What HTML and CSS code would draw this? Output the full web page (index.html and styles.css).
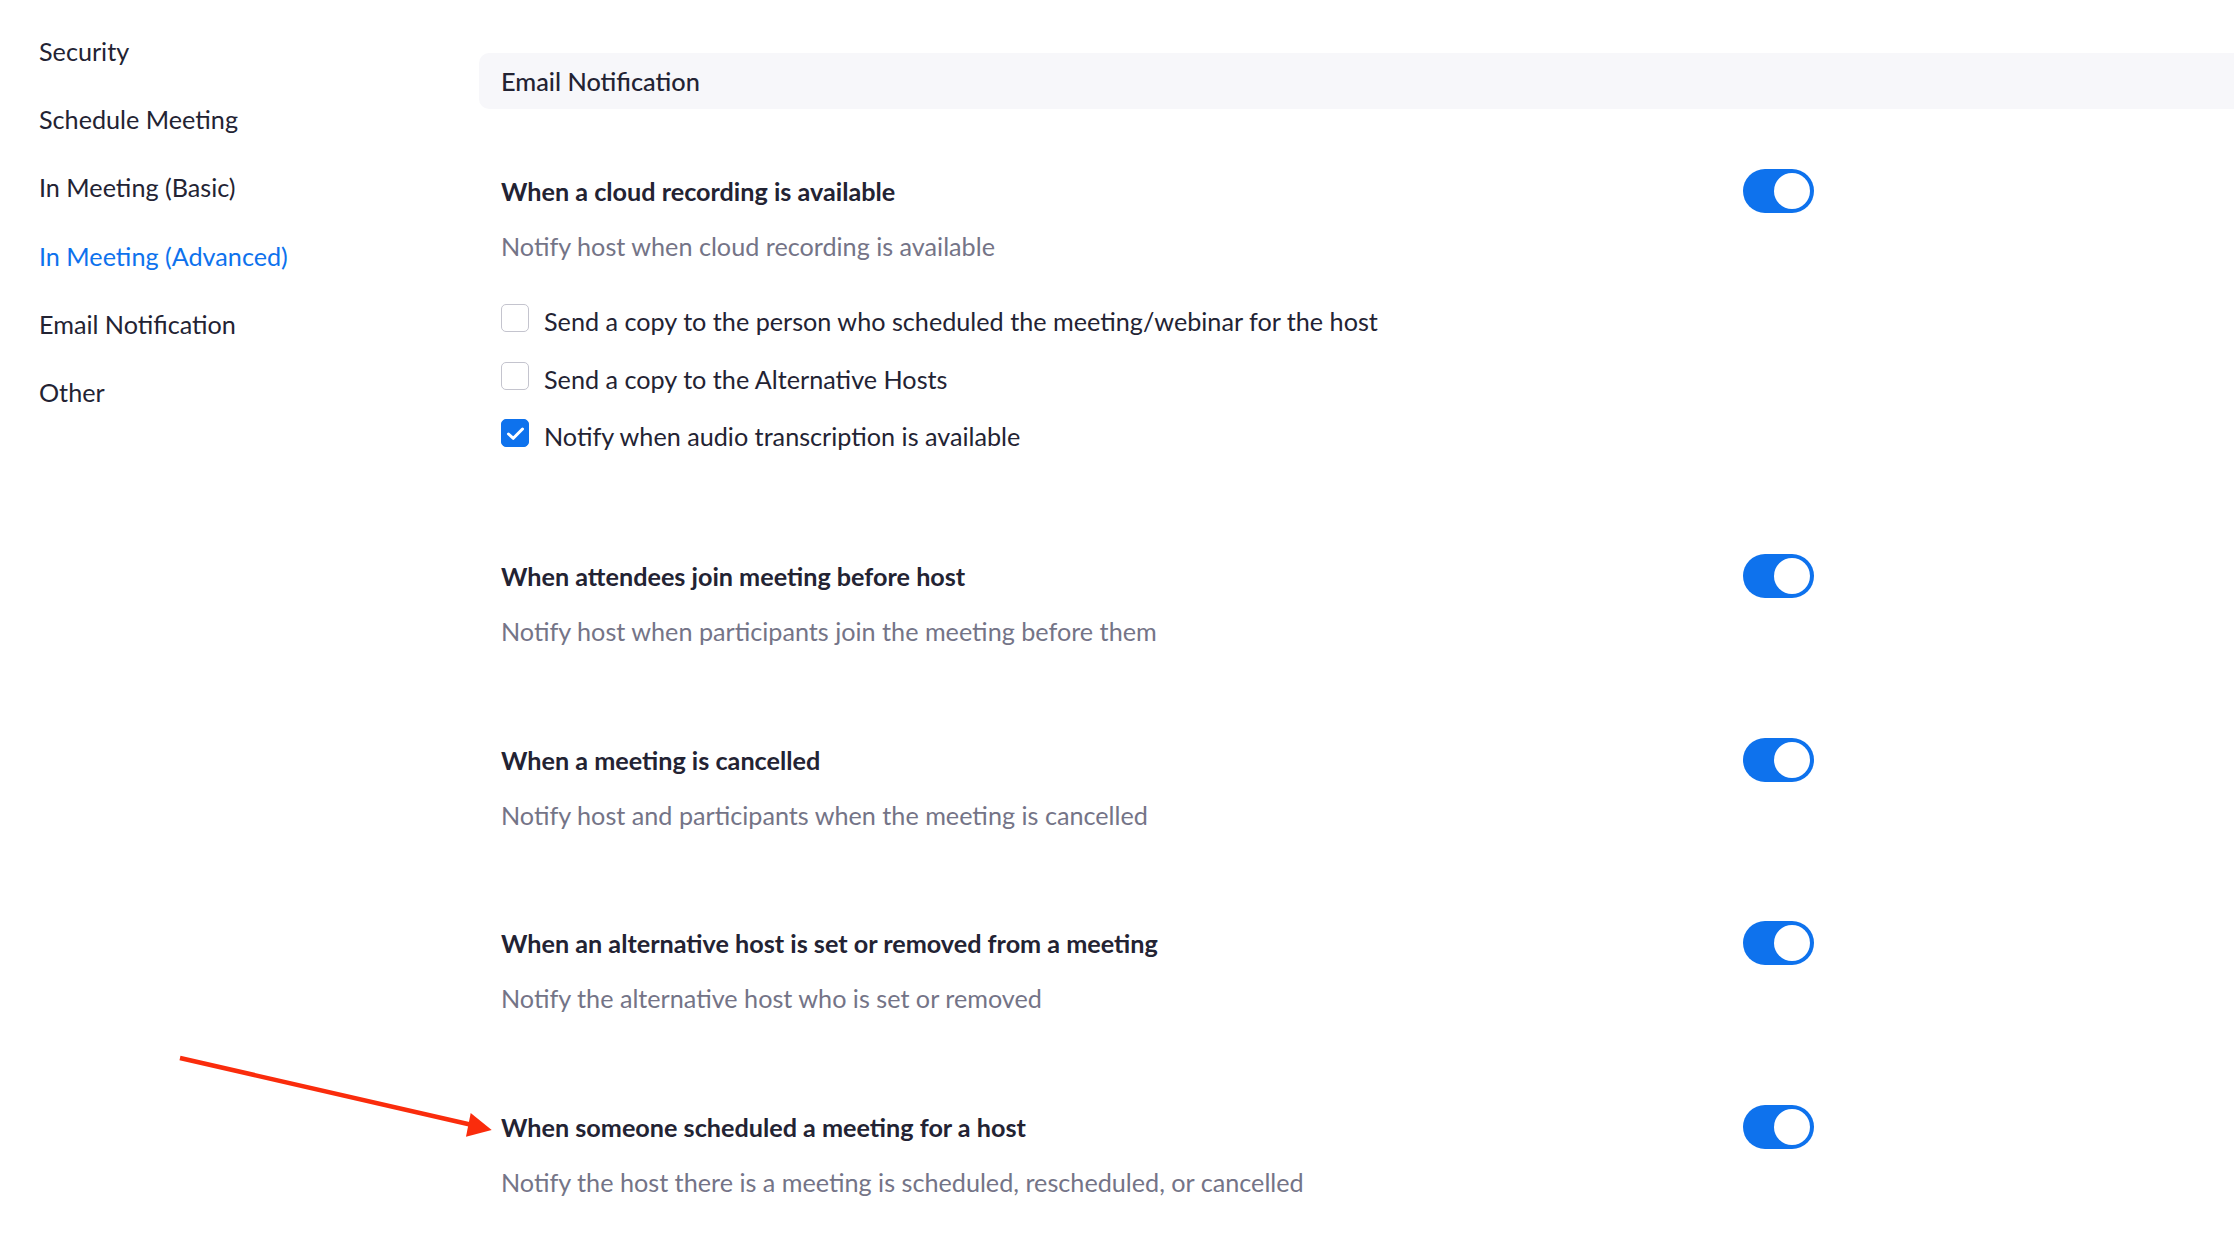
FILE: index.html
```html
<!DOCTYPE html>
<html lang="en">
<head>
<meta charset="utf-8">
<title>Email Notification Settings</title>
<link rel="stylesheet" href="styles.css">
</head>
<body>
<div class="page">
  <nav class="sidebar">
    <div class="nav-item">Security</div>
    <div class="nav-item">Schedule Meeting</div>
    <div class="nav-item">In Meeting (Basic)</div>
    <div class="nav-item active">In Meeting (Advanced)</div>
    <div class="nav-item">Email Notification</div>
    <div class="nav-item">Other</div>
  </nav>
  <main class="main">
    <div class="group-head">Email Notification</div>
    <div class="settings">
      <div class="setting">
        <div class="setting-row">
          <div class="setting-title">When a cloud recording is available</div>
          <div class="toggle"><span class="knob"></span></div>
        </div>
        <div class="setting-desc">Notify host when cloud recording is available</div>
        <div class="checks">
          <label class="check"><span class="box"></span><span>Send a copy to the person who scheduled the meeting/webinar for the host</span></label>
          <label class="check"><span class="box"></span><span>Send a copy to the Alternative Hosts</span></label>
          <label class="check"><span class="box checked"><svg width="28" height="28" viewBox="0 0 28 28"><polyline points="7.5,15 12.3,19.3 21.5,10" fill="none" stroke="#fff" stroke-width="3" stroke-linecap="round" stroke-linejoin="round"/></svg></span><span>Notify when audio transcription is available</span></label>
        </div>
      </div>
      <div class="setting">
        <div class="setting-row">
          <div class="setting-title">When attendees join meeting before host</div>
          <div class="toggle"><span class="knob"></span></div>
        </div>
        <div class="setting-desc">Notify host when participants join the meeting before them</div>
      </div>
      <div class="setting">
        <div class="setting-row">
          <div class="setting-title">When a meeting is cancelled</div>
          <div class="toggle"><span class="knob"></span></div>
        </div>
        <div class="setting-desc">Notify host and participants when the meeting is cancelled</div>
      </div>
      <div class="setting">
        <div class="setting-row">
          <div class="setting-title">When an alternative host is set or removed from a meeting</div>
          <div class="toggle"><span class="knob"></span></div>
        </div>
        <div class="setting-desc">Notify the alternative host who is set or removed</div>
      </div>
      <div class="setting">
        <div class="setting-row">
          <div class="setting-title">When someone scheduled a meeting for a host</div>
          <div class="toggle"><span class="knob"></span></div>
        </div>
        <div class="setting-desc">Notify the host there is a meeting is scheduled, rescheduled, or cancelled</div>
      </div>
    </div>
  </main>
  <svg class="arrow" width="330" height="100" viewBox="0 0 330 100">
    <line x1="10" y1="13" x2="300" y2="79.5" stroke="#fa2c0c" stroke-width="4.5"/>
    <polygon points="321.7,85 300.7,68 296,91.7" fill="#fa2c0c"/>
  </svg>
</div>
</body>
</html>
```
FILE: styles.css
```css
html, body {
  margin: 0;
  padding: 0;
  background: #ffffff;
}

body {
  font-family: Lato, "Open Sans", "Liberation Sans", sans-serif;
  color: #232333;
}

.page {
  position: relative;
  display: flex;
  min-height: 1254px;
  overflow: hidden;
}

.sidebar {
  flex: none;
  width: 440px;
  padding: 17px 0 0 39px;
}

.nav-item {
  font-size: 25.2px;
  line-height: 68.2px;
  color: #232333;
}

.nav-item.active {
  color: #0e72ed;
}

.main {
  flex: 1;
  padding-top: 53px;
}

.group-head {
  height: 56px;
  line-height: 56px;
  padding-left: 22px;
  font-size: 25.3px;
  font-weight: 500;
  background: #f7f7fa;
  border-radius: 10px 0 0 10px;
  color: #232333;
}

.settings {
  width: 1313px;
  padding: 60px 0 0 22px;
}

.setting + .setting {
  margin-top: 89.5px;
}

.setting-row {
  display: flex;
  align-items: center;
  justify-content: space-between;
  height: 44px;
}

.setting-title {
  font-size: 25.2px;
  font-weight: 700;
  line-height: 44px;
  color: #232333;
}

.setting-desc {
  margin-top: 16px;
  font-size: 25.2px;
  line-height: 34px;
  color: #747487;
}

.toggle {
  flex: none;
  display: flex;
  justify-content: flex-end;
  align-items: center;
  box-sizing: border-box;
  width: 71px;
  height: 44px;
  padding: 0 4px;
  border-radius: 22px;
  background: #0e72ed;
}

.knob {
  width: 36px;
  height: 36px;
  border-radius: 50%;
  background: #ffffff;
}

.checks {
  display: flex;
  flex-direction: column;
  gap: 17.5px;
  margin-top: 38px;
  padding-bottom: 8.5px;
}

.check {
  display: flex;
  align-items: flex-start;
  gap: 15px;
  height: 40px;
  font-size: 25.2px;
  line-height: 40px;
  color: #232333;
}

.box {
  flex: none;
  box-sizing: border-box;
  width: 28px;
  height: 28px;
  margin-top: 3px;
  border: 1.5px solid #c4c4ce;
  border-radius: 5px;
  background: #ffffff;
  position: relative;
}

.box.checked {
  border-color: #0e72ed;
  background: #0e72ed;
}

.box.checked svg {
  position: absolute;
  left: -1.5px;
  top: -1.5px;
}

.arrow {
  position: absolute;
  left: 170px;
  top: 1045px;
}
```
